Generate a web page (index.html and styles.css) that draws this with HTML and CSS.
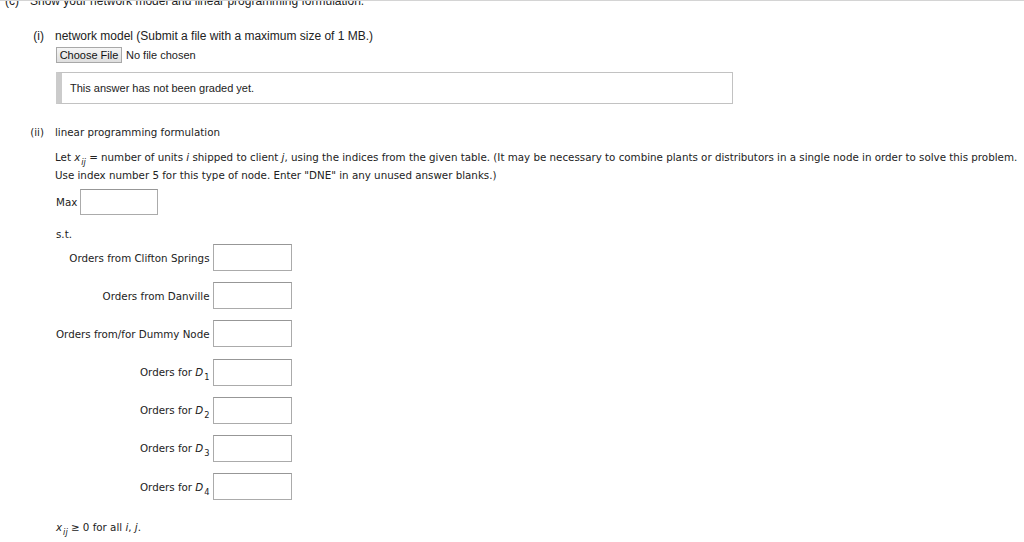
FILE: index.html
```html
<!DOCTYPE html>
<html>
<head>
<meta charset="utf-8">
<link rel="stylesheet" href="styles.css">
</head>
<body>
<div class="page">
  <div class="qc"><span class="qnum">(c)</span><span>Show your network model and linear programming formulation.</span></div>

  <div class="part part-i">
    <span class="pnum">(i)</span>
    <div class="pbody">
      <div class="ptitle">network model (Submit a file with a maximum size of 1 MB.)</div>
      <div class="filerow"><span class="filebtn">Choose File</span><span class="filename">No file chosen</span></div>
      <div class="graded">This answer has not been graded yet.</div>
    </div>
  </div>

  <div class="part part-ii">
    <span class="pnum">(ii)</span>
    <div class="pbody">
      <div class="ptitle">linear programming formulation</div>
      <p class="intro">Let <i class="var">x</i><sub class="sub"><i>ij</i></sub> = number of units <i>i</i> shipped to client <i>j</i>, using the indices from the given table. (It may be necessary to combine plants or distributors in a single node in order to solve this problem. Use index number 5 for this type of node. Enter "DNE" in any unused answer blanks.)</p>
      <div class="maxrow"><span>Max</span><span class="box box-max"></span></div>
      <div class="st">s.t.</div>
      <div class="cons">
        <span class="lbl">Orders from Clifton Springs</span><span class="box"></span>
        <span class="lbl">Orders from Danville</span><span class="box"></span>
        <span class="lbl">Orders from/for Dummy Node</span><span class="box"></span>
        <span class="lbl">Orders for <i class="var">D</i><sub class="sub">1</sub></span><span class="box"></span>
        <span class="lbl">Orders for <i class="var">D</i><sub class="sub">2</sub></span><span class="box"></span>
        <span class="lbl">Orders for <i class="var">D</i><sub class="sub">3</sub></span><span class="box"></span>
        <span class="lbl">Orders for <i class="var">D</i><sub class="sub">4</sub></span><span class="box"></span>
      </div>
      <div class="nonneg"><i class="var">x</i><sub class="sub"><i>ij</i></sub> ≥ 0 for all <i>i</i>, <i>j</i>.</div>
    </div>
  </div>
</div>
</body>
</html>
```

FILE: styles.css
```css
html, body {
  margin: 0;
  padding: 0;
  background: #fff;
}

body {
  color: #222;
  font-family: "Liberation Sans", Arial, sans-serif;
}

.page {
  border-top: 1px solid #d4d4d4;
  overflow: hidden;
  height: 541px;
}

.qc {
  display: flex;
  margin-top: -7px;
  font-size: 12px;
  line-height: 14px;
}

.qnum {
  width: 25px;
  padding-left: 5px;
  flex: none;
}

.part {
  display: flex;
  align-items: flex-start;
}

.pnum {
  width: 44px;
  text-align: right;
  flex: none;
}

.pbody {
  margin-left: 11px;
  flex: 1;
  min-width: 0;
}

.part-i {
  margin-top: 20px;
  font-size: 12px;
  line-height: 16px;
}

.filerow {
  display: flex;
  align-items: center;
  margin-top: 3px;
  height: 16px;
  font-size: 11px;
}

.filebtn {
  box-sizing: border-box;
  height: 16px;
  width: 66px;
  margin-left: 1px;
  border: 1px solid #a8a8a8;
  background: linear-gradient(#f6f6f6, #dedede);
  line-height: 14px;
  text-align: center;
  color: #111;
}

.filename {
  margin-left: 4px;
  color: #222;
}

.graded {
  box-sizing: border-box;
  margin-top: 9px;
  margin-left: 1px;
  width: 677px;
  height: 32px;
  border: 1px solid #c2c2c2;
  border-left: 6px solid #cbcbcb;
  padding-left: 8px;
  font-size: 11px;
  line-height: 30px;
  color: #222;
}

.part-ii {
  margin-top: 19px;
  font-family: "DejaVu Sans", Verdana, sans-serif;
  font-size: 10.3px;
  line-height: 18px;
}

.intro {
  margin: 7px 0 0 0;
  padding-right: 6px;
}

.var {
  padding-right: 1px;
}

.sub {
  font-size: 0.8em;
  vertical-align: -0.5em;
  line-height: 0;
}

.maxrow {
  display: flex;
  align-items: center;
  gap: 3px;
  margin-top: 5px;
  margin-left: 1px;
}

.box {
  box-sizing: border-box;
  display: block;
  width: 79px;
  height: 27px;
  border: 1px solid #ababab;
  border-top-color: #979797;
  background: #fff;
}

.box-max {
  width: 78px;
  height: 26px;
}

.st {
  margin-top: 10px;
  margin-left: 1px;
}

.cons {
  display: grid;
  grid-template-columns: max-content max-content;
  column-gap: 3px;
  row-gap: 11.2px;
  align-items: center;
  margin-top: 1px;
  margin-left: 1px;
}

.lbl {
  text-align: right;
}

.nonneg {
  margin-top: 18px;
  margin-left: 1px;
}
```
